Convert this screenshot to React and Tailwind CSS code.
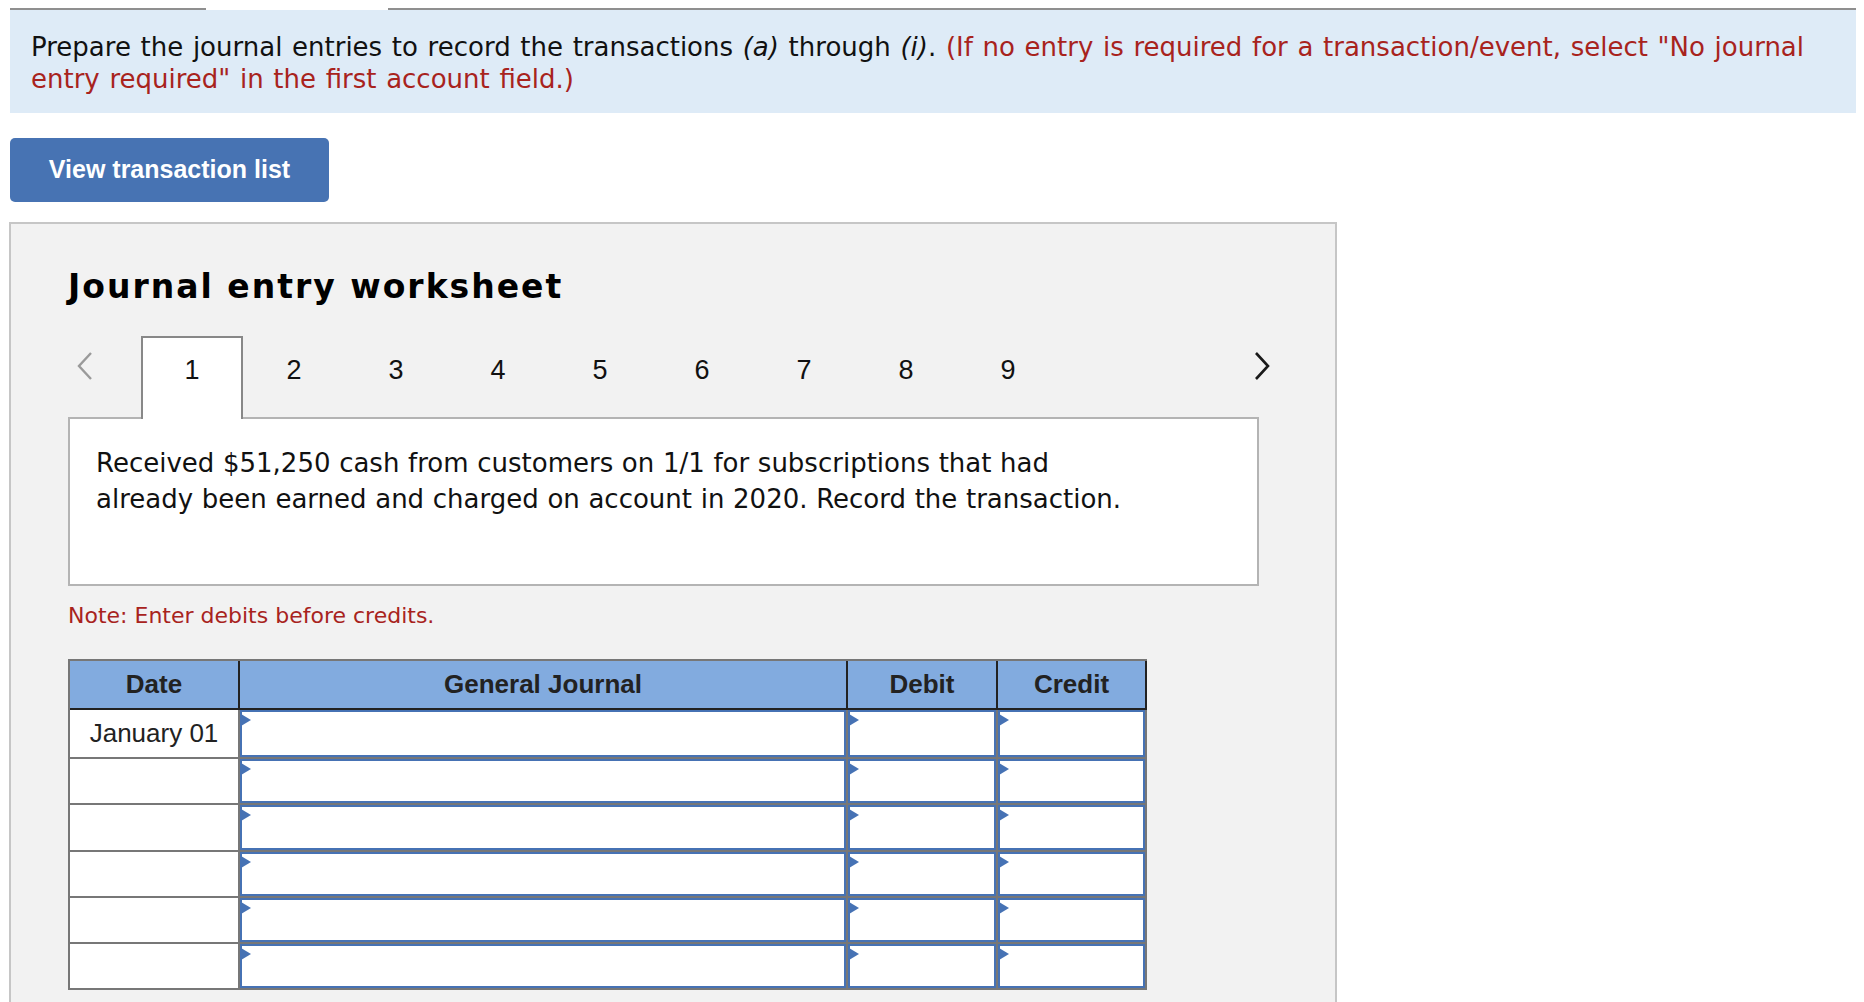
import React from "react";

function Tri() {
  return (
    <svg width="10" height="12" viewBox="0 0 10 12" className="absolute left-[-1px] top-[2px] block">
      <polygon points="0,0 10,6 0,12" fill="#4672b4" />
    </svg>
  );
}

function InBox() {
  return (
    <div className="relative h-full w-full border-2 border-[#4672b4] bg-white">
      <Tri />
    </div>
  );
}

function ChevronLeft() {
  return (
    <svg width="18" height="30" viewBox="0 0 18 30" className="block">
      <polyline points="15,2 3,15 15,28" fill="none" stroke="#9a9a9a" strokeWidth="2.4" />
    </svg>
  );
}

function ChevronRight() {
  return (
    <svg width="18" height="30" viewBox="0 0 18 30" className="block">
      <polyline points="3,2 15,15 3,28" fill="none" stroke="#1a1a1a" strokeWidth="2.6" />
    </svg>
  );
}

const rows = [
  { h: "h-[47px]", date: "January 01" },
  { h: "h-[44px]", date: "" },
  { h: "h-[45px]", date: "" },
  { h: "h-[44px]", date: "" },
  { h: "h-[44px]", date: "" },
  { h: "h-[44px]", date: "" },
];

export default function App() {
  return (
    <div className="h-[1002px] w-[1864px] overflow-hidden bg-white pt-[8px]">
      {/* top rule */}
      <div className="flex h-[2px]">
        <div className="ml-[10px] h-[2px] w-[196px] bg-[#8f8f8f]" />
        <div className="w-[182px]" />
        <div className="mr-[8px] h-[2px] flex-1 bg-[#8f8f8f]" />
      </div>

      {/* instruction band */}
      <div className="ml-[10px] mr-[8px] h-[103px] bg-[#deebf7] pl-[21px] pt-[21px] font-['DejaVu_Sans',sans-serif] text-[26px] leading-[32px] [word-spacing:1.4px] text-[#111]">
        Prepare the journal entries to record the transactions <i>(a)</i> through <i>(i)</i>.{" "}
        <span className="text-[#a8231d]">
          (If no entry is required for a transaction/event, select "No journal
          <br />
          entry required" in the first account field.)
        </span>
      </div>

      {/* button */}
      <div className="ml-[10px] mt-[25px] flex h-[64px] w-[319px] items-center justify-center rounded-[5px] bg-[#4773b3] font-['Liberation_Sans',Arial,sans-serif] text-[25px] font-bold text-white">
        View transaction list
      </div>

      {/* worksheet panel */}
      <div className="ml-[9px] mt-[20px] h-[820px] w-[1328px] border-2 border-[#c6c6c6] bg-[#f2f2f2] pl-[57px] pt-[43px]">
        <div className="h-[40px] font-['DejaVu_Sans',sans-serif] text-[33px] font-bold leading-[40px] tracking-[2px] text-black">
          Journal entry worksheet
        </div>

        {/* tabs */}
        <div className="mt-[29px] flex h-[81px] items-start font-['Liberation_Sans',Arial,sans-serif] text-[27px] leading-[32px] text-[#111]">
          <div className="flex h-[60px] w-[73px] items-center pl-[8px]">
            <ChevronLeft />
          </div>
          {[1, 2, 3, 4, 5, 6, 7, 8, 9].map((n) =>
            n === 1 ? (
              <div
                key={n}
                className="relative z-10 flex h-[83px] w-[102px] justify-center border-2 border-b-0 border-[#888] bg-white pt-[16px]"
              >
                {n}
              </div>
            ) : (
              <div key={n} className="flex h-[81px] w-[102px] justify-center pt-[18px]">
                {n}
              </div>
            )
          )}
          <div className="w-[194px]" />
          <div className="flex h-[60px] items-center">
            <ChevronRight />
          </div>
        </div>

        {/* description */}
        <div className="h-[169px] w-[1191px] border-2 border-[#b4b4b4] bg-white pl-[26px] pt-[26px] font-['DejaVu_Sans',sans-serif] text-[26px] leading-[36px] [word-spacing:0.4px] text-[#111]">
          Received $51,250 cash from customers on 1/1 for subscriptions that had
          <br />
          already been earned and charged on account in 2020. Record the transaction.
        </div>

        {/* note */}
        <div className="mt-[17px] font-['DejaVu_Sans',sans-serif] text-[22px] leading-[26px] text-[#a8231d]">
          Note: Enter debits before credits.
        </div>

        {/* table */}
        <div className="mt-[30px] w-[1079px] border-l-2 border-t-2 border-[#777] font-['Liberation_Sans',Arial,sans-serif] text-[26px] text-[#222]">
          <div className="flex h-[49px] border-b-2 border-[#222] bg-[#82abdf] font-bold">
            <div className="flex w-[168px] items-center justify-center">Date</div>
            <div className="flex w-[608px] items-center justify-center border-l-2 border-[#222]">
              General Journal
            </div>
            <div className="flex w-[150px] items-center justify-center border-l-2 border-[#222]">
              Debit
            </div>
            <div className="flex w-[151px] items-center justify-center border-x-2 border-[#222]">
              Credit
            </div>
          </div>
          {rows.map((r, i) => (
            <div key={i} className="flex border-b-2 border-[#777]">
              <div className={`flex w-[168px] items-center justify-center bg-white ${r.h}`}>
                {r.date}
              </div>
              <div className={`w-[608px] border-l-2 border-[#777] ${r.h}`}>
                <InBox />
              </div>
              <div className={`w-[150px] border-l-2 border-[#777] ${r.h}`}>
                <InBox />
              </div>
              <div className={`w-[151px] border-x-2 border-[#777] ${r.h}`}>
                <InBox />
              </div>
            </div>
          ))}
        </div>
      </div>
    </div>
  );
}
